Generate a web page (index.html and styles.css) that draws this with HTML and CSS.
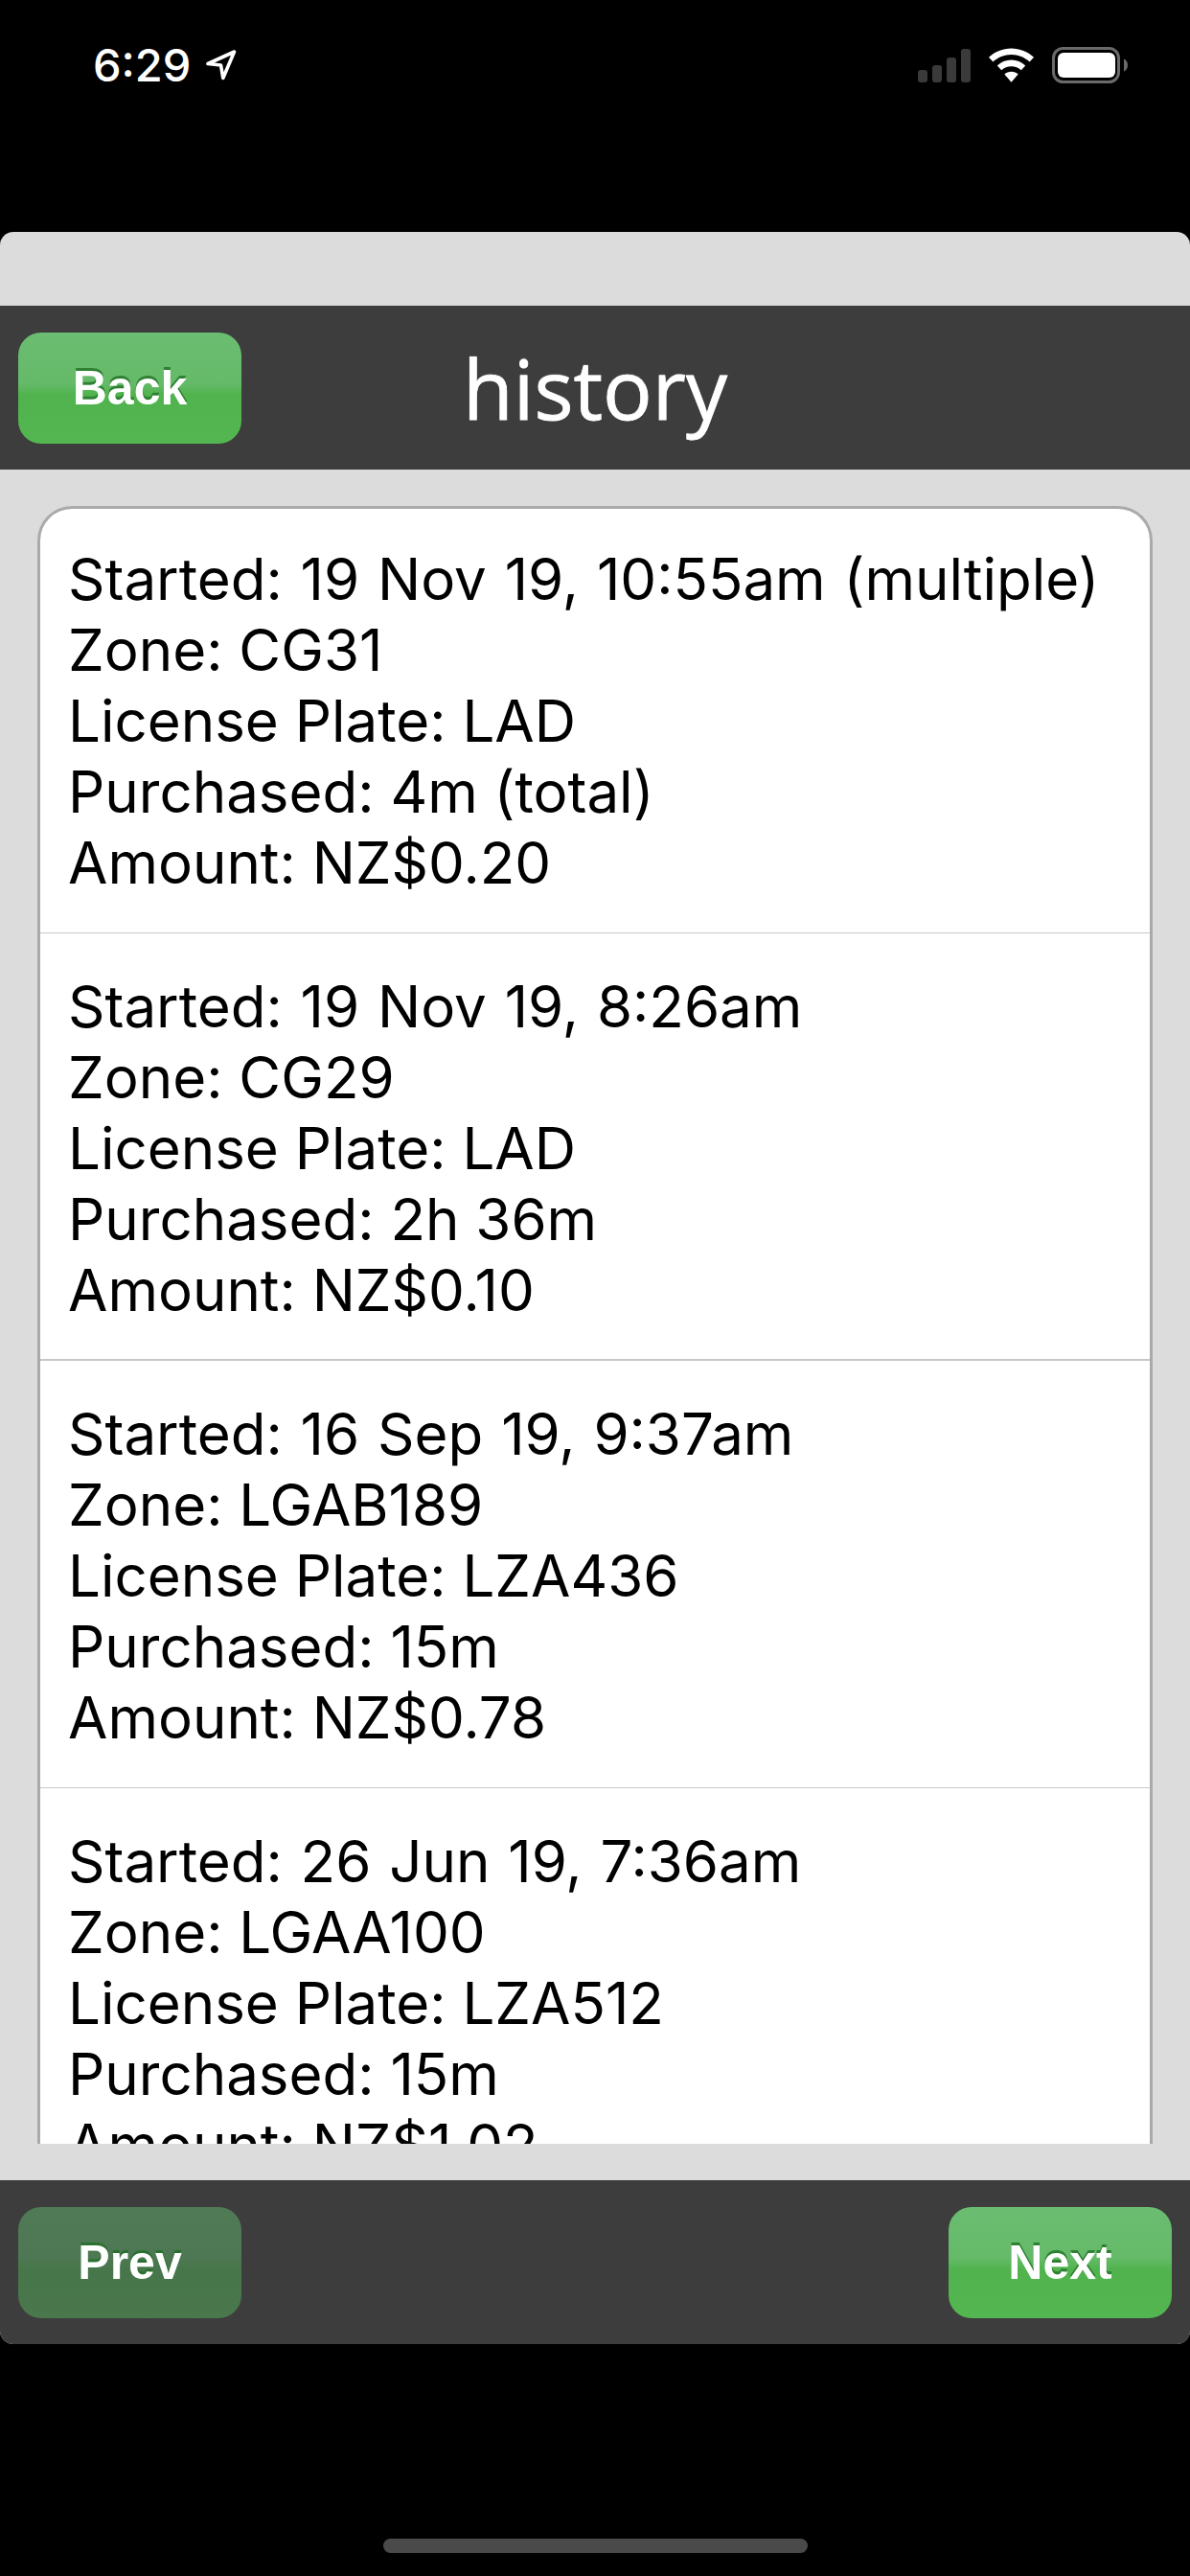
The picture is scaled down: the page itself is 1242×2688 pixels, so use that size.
FILE: index.html
```html
<!DOCTYPE html>
<html lang="en">
<head>
<meta charset="utf-8">
<title>history</title>
<link rel="stylesheet" href="styles.css">
</head>
<body>
<div class="status">
  <div class="clock"><span>6:29</span>
    <svg class="arrow" viewBox="0 0 32 32"><path d="M2 14.500 L29.500 2 L17.800 29.500 L15.500 16 Z" fill="none" stroke="#fff" stroke-width="3.600" stroke-linejoin="round"/></svg>
  </div>
  <div class="indicators">
    <svg class="signal" viewBox="0 0 55 35"><g fill="#3a3a3a"><rect x="0" y="22" width="10" height="13" rx="3"/><rect x="15" y="17" width="10" height="18" rx="3"/><rect x="30" y="9" width="10" height="26" rx="3"/><rect x="45" y="0" width="10" height="35" rx="3"/></g></svg>
    <svg class="wifi" viewBox="0 0 48 36"><g fill="#fff"><path d="M24 0 C33 0 41.500 3.500 48 9.500 L43.500 14.500 C38.300 9.700 31.500 6.800 24 6.800 C16.500 6.800 9.700 9.700 4.500 14.500 L0 9.500 C6.500 3.500 15 0 24 0 Z"/><path d="M24 12.500 C29.800 12.500 35 14.800 39 18.500 L34.500 23.300 C31.700 20.800 28 19.300 24 19.300 C20 19.300 16.300 20.800 13.500 23.300 L9 18.500 C13 14.800 18.200 12.500 24 12.500 Z"/><path d="M24 25 C26.800 25 29.400 26 31.300 27.800 L24 36 L16.700 27.800 C18.600 26 21.200 25 24 25 Z"/></g></svg>
    <svg class="battery" viewBox="0 0 79 38"><rect x="1.500" y="1.500" width="68" height="35" rx="10" fill="none" stroke="#6a6a6a" stroke-width="3"/><rect x="6" y="6" width="60" height="26" rx="6" fill="#fff"/><path d="M75 12.500 C77.500 13.500 79 16 79 19 C79 22 77.500 24.500 75 25.500 Z" fill="#6a6a6a"/></svg>
  </div>
</div>
<main class="panel">
  <div class="spacer"></div>
  <header class="bar">
    <button class="btn">Back</button>
    <h1 class="title">history</h1>
  </header>
  <section class="content">
    <div class="card">
      <div class="row"><p class="started">Started: 19 Nov 19, 10:55am (multiple)</p><p>Zone: CG31</p><p>License Plate: LAD</p><p>Purchased: 4m (total)</p><p>Amount: NZ$0.20</p></div>
      <div class="row"><p class="started">Started: 19 Nov 19, 8:26am</p><p>Zone: CG29</p><p>License Plate: LAD</p><p>Purchased: 2h 36m</p><p>Amount: NZ$0.10</p></div>
      <div class="row"><p class="started">Started: 16 Sep 19, 9:37am</p><p>Zone: LGAB189</p><p>License Plate: LZA436</p><p>Purchased: 15m</p><p>Amount: NZ$0.78</p></div>
      <div class="row"><p class="started">Started: 26 Jun 19, 7:36am</p><p>Zone: LGAA100</p><p>License Plate: LZA512</p><p>Purchased: 15m</p><p>Amount: NZ$1.02</p></div>
    </div>
  </section>
  <footer class="bar">
    <button class="btn dim">Prev</button>
    <button class="btn">Next</button>
  </footer>
</main>
<div class="home"><div class="handle"></div></div>
</body>
</html>
```
FILE: styles.css
```css
* { box-sizing: border-box; }
html, body { margin: 0; padding: 0; background: #000; }
body { width: 1242px; height: 2688px; overflow: hidden; display: flex; flex-direction: column; font-family: Inter, "Liberation Sans", Arial, sans-serif; }

.status { height: 242px; flex: none; display: flex; justify-content: space-between; align-items: flex-start; padding: 49px 65px 0 97px; color: #fff; }
.clock { display: flex; align-items: center; gap: 16px; font-family: Inter, "Liberation Sans", sans-serif; font-size: 47px; font-weight: 500; line-height: 38px; }
.arrow { width: 32px; height: 32px; }
.indicators { display: flex; align-items: center; gap: 19px; }
.signal { width: 55px; height: 35px; }
.wifi { width: 47px; height: 36px; }
.battery { width: 79px; height: 38px; }

.panel { height: 2204px; flex: none; display: flex; flex-direction: column; background: #dcdcdc; border-radius: 14px; overflow: hidden; }
.spacer { height: 77px; flex: none; }
.bar { position: relative; height: 171px; flex: none; display: flex; align-items: center; justify-content: space-between; padding: 0 19px; background: #3d3d3d; }
.title { position: absolute; left: 0; right: 0; top: 0; bottom: 0; margin: 0; display: flex; align-items: center; justify-content: center; color: #fff; font-family: "Open Sans", sans-serif; font-weight: 400; font-size: 86px; -webkit-text-stroke: 0.8px #fff; text-shadow: 0 -1px 1px #777; pointer-events: none; }

.btn { width: 233px; height: 116px; border: 0; padding: 0; border-radius: 24px; color: #fff; font-family: "Liberation Sans", Arial, sans-serif; font-weight: 700; font-size: 50px; text-shadow: 0 -3px 0 #2e8033; background: linear-gradient(to bottom, #6bbd71 0%, #65ba69 46%, #50b34d 56%, #54b651 100%); }
.dim { background: linear-gradient(to bottom, #507a56 0%, #4e7853 46%, #47764a 56%, #4a774c 100%); text-shadow: 0 -3px 0 #2a7030; }

.content { flex: 1; min-height: 0; padding: 38px 39px; }
.card { height: 100%; overflow: hidden; background: #fff; border: 3px solid #aaa; border-bottom: 0; border-radius: 36px 36px 0 0; }
.row { height: 446px; padding: 39px 29px 0; border-bottom: 1px solid #c8c8c8; color: #000; font-size: 60px; line-height: 74px; }
.row:first-child { height: 443px; padding-top: 36px; }
.row:nth-child(2) { border-bottom-width: 2px; }
.row p { margin: 0; white-space: nowrap; }
.row .started { word-spacing: 2px; }

.home { flex: 1; display: flex; justify-content: center; padding-top: 203px; }
.handle { width: 443px; height: 15px; border-radius: 8px; background: #4a4a4a; }
```
